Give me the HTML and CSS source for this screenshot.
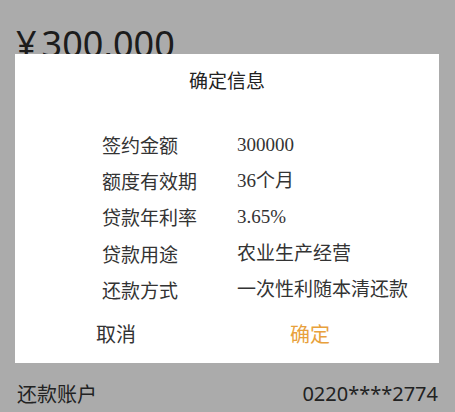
FILE: index.html
```html
<!DOCTYPE html>
<html lang="zh-CN">
<head>
<meta charset="utf-8">
<title>确定信息</title>
<link rel="stylesheet" href="styles.css">
</head>
<body>
<div class="page">
  <div class="amount"><span class="currency">¥</span>300,000</div>
  <div class="spacer"></div>
  <div class="account-row">
    <span class="account-label">还款账户</span>
    <span class="account-no">0220****2774</span>
  </div>
</div>
<div class="mask"></div>
<div class="dialog">
  <div class="dialog-title">确定信息</div>
  <div class="rows">
    <div class="row"><span class="label">签约金额</span><span class="value">300000</span></div>
    <div class="row"><span class="label">额度有效期</span><span class="value">36个月</span></div>
    <div class="row"><span class="label">贷款年利率</span><span class="value">3.65%</span></div>
    <div class="row"><span class="label">贷款用途</span><span class="value">农业生产经营</span></div>
    <div class="row"><span class="label">还款方式</span><span class="value">一次性利随本清还款</span></div>
  </div>
  <div class="buttons">
    <span class="btn btn-cancel">取消</span>
    <span class="btn btn-ok">确定</span>
  </div>
</div>
</body>
</html>
```
FILE: styles.css
```css
html, body {
  margin: 0;
  padding: 0;
}
body {
  width: 455px;
  height: 412px;
  overflow: hidden;
  background: #fff;
  font-family: "Noto Sans CJK SC", "Noto Sans", sans-serif;
  color: #333;
  position: relative;
}
.page {
  height: 412px;
  display: flex;
  flex-direction: column;
}
.amount {
  font-family: "Noto Sans", "Noto Sans CJK SC", sans-serif;
  font-size: 36px;
  line-height: 40px;
  margin-top: 24px;
  padding-left: 16px;
  color: #2a2a2a;
}
.currency {
  margin-right: 5px;
}
.spacer {
  flex: 1;
}
.account-row {
  display: flex;
  justify-content: space-between;
  align-items: center;
  height: 36px;
  margin-bottom: 1px;
  padding: 0 17px 0 17px;
  font-size: 20px;
  color: #333;
}
.account-no {
  font-family: "Noto Sans", sans-serif;
}
.mask {
  position: absolute;
  left: 0;
  top: 0;
  width: 455px;
  height: 412px;
  background: rgba(0, 0, 0, 0.33);
}
.dialog {
  position: absolute;
  left: 15px;
  top: 54px;
  width: 424px;
  height: 309px;
  background: #fff;
  display: flex;
  flex-direction: column;
}
.dialog-title {
  height: 52px;
  line-height: 52px;
  text-align: center;
  font-size: 19px;
  color: #222;
}
.rows {
  margin-top: 21px;
  display: flex;
  flex-direction: column;
}
.row {
  display: flex;
  height: 36.2px;
  line-height: 36.2px;
  padding-left: 87px;
  font-size: 19px;
}
.label {
  width: 135px;
  color: #333;
}
.value {
  font-family: "Liberation Serif", "Noto Sans CJK SC", serif;
  color: #333;
}
.buttons {
  display: flex;
  height: 52px;
  line-height: 52px;
  padding-left: 81px;
  font-size: 20px;
}
.btn-cancel {
  color: #333;
  width: 194px;
}
.btn-ok {
  color: #e8a13c;
}
```
